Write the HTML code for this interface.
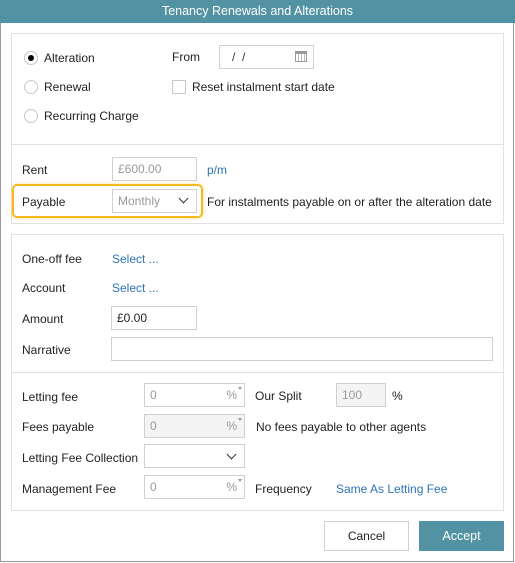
<!DOCTYPE html>
<html><head><style>
*{box-sizing:border-box}
body{margin:0;width:515px;height:563px;background:#fff;font-family:"Liberation Sans",sans-serif;font-size:12px;color:#222;position:relative;overflow:hidden}
.a{position:absolute}
.win{left:0;top:0;width:514px;height:562px;border:1px solid #9a9a9a;border-top:none}
.title{left:0;top:0;width:515px;height:23px;background:#5292a3;color:#fff;text-align:center;line-height:23px;font-size:12.5px}
.panel{border:1px solid #e1e1e1;background:#fff}
.inp{border:1px solid #d0d0d0;background:#fff;height:24px;line-height:22px;padding-left:5px;color:#999}
.dis{background:#f4f4f4}
.lnk{color:#2e74b5}
.rad{width:14px;height:14px;border:1px solid #c8c8c8;border-radius:50%;background:#fff}
.pct{position:absolute;right:7px;top:0;color:#999}
.pct:after{content:"";position:absolute;right:-5px;top:3px;border:2px solid transparent;border-top:3px solid #999}
.chev{position:absolute;right:9px;top:6px;width:7px;height:7px;border-right:1.5px solid #333;border-bottom:1.5px solid #333;transform:rotate(45deg)}
</style></head><body>
<div class="a win"></div>
<div class="a title">Tenancy Renewals and Alterations</div>

<div class="a panel" style="left:11px;top:33px;width:493px;height:191px"></div>
<div class="a" style="left:12px;top:144px;width:491px;height:1px;background:#e1e1e1"></div>

<div class="a rad" style="left:24px;top:51px"><div class="a" style="left:3px;top:3px;width:6px;height:6px;border-radius:50%;background:#000"></div></div>
<div class="a" style="left:44px;top:51px">Alteration</div>
<div class="a rad" style="left:24px;top:80px"></div>
<div class="a" style="left:44px;top:80px">Renewal</div>
<div class="a rad" style="left:24px;top:109px"></div>
<div class="a" style="left:44px;top:109px">Recurring Charge</div>

<div class="a" style="left:172px;top:50px">From</div>
<div class="a inp" style="left:219px;top:45px;width:95px;color:#333;padding-left:12px">/ &nbsp;/</div>
<div class="a" style="left:295px;top:51px;width:12px;height:11px;border:1px solid #999;border-top:3px solid #999;background:repeating-linear-gradient(90deg,#fff 0 2px,#bbb 2px 3px)"></div>
<div class="a" style="left:172px;top:80px;width:14px;height:14px;border:1px solid #c8c8c8"></div>
<div class="a" style="left:192px;top:80px">Reset instalment start date</div>

<div class="a" style="left:22px;top:163px">Rent</div>
<div class="a inp" style="left:112px;top:157px;width:85px">£600.00</div>
<div class="a lnk" style="left:207px;top:163px">p/m</div>
<div class="a" style="left:12px;top:184px;width:191px;height:34px;border:2px solid #f5b91f;border-radius:5px;box-shadow:0 0 4px rgba(245,185,31,.4)"></div>
<div class="a" style="left:22px;top:195px">Payable</div>
<div class="a inp" style="left:112px;top:189px;width:85px">Monthly<span class="chev" style="top:5px"></span></div>
<div class="a" style="left:207px;top:195px">For instalments payable on or after the alteration date</div>

<div class="a panel" style="left:11px;top:234px;width:493px;height:277px"></div>
<div class="a" style="left:12px;top:372px;width:491px;height:1px;background:#e1e1e1"></div>

<div class="a" style="left:22px;top:252px">One-off fee</div>
<div class="a lnk" style="left:112px;top:252px">Select ...</div>
<div class="a" style="left:22px;top:281px">Account</div>
<div class="a lnk" style="left:112px;top:281px">Select ...</div>
<div class="a" style="left:22px;top:312px">Amount</div>
<div class="a inp" style="left:111px;top:306px;width:86px;color:#222">£0.00</div>
<div class="a" style="left:22px;top:343px">Narrative</div>
<div class="a inp" style="left:111px;top:337px;width:382px"></div>

<div class="a" style="left:22px;top:390px">Letting fee</div>
<div class="a inp" style="left:144px;top:383px;width:101px">0<span class="pct">%</span></div>
<div class="a" style="left:255px;top:389px">Our Split</div>
<div class="a inp dis" style="left:336px;top:383px;width:50px">100</div>
<div class="a" style="left:392px;top:389px">%</div>
<div class="a" style="left:22px;top:420px">Fees payable</div>
<div class="a inp dis" style="left:144px;top:414px;width:101px">0<span class="pct">%</span></div>
<div class="a" style="left:256px;top:420px">No fees payable to other agents</div>
<div class="a" style="left:22px;top:451px">Letting Fee Collection</div>
<div class="a inp" style="left:144px;top:444px;width:101px"><span class="chev"></span></div>
<div class="a" style="left:22px;top:482px">Management Fee</div>
<div class="a inp" style="left:144px;top:475px;width:101px">0<span class="pct">%</span></div>
<div class="a" style="left:255px;top:482px">Frequency</div>
<div class="a lnk" style="left:336px;top:482px">Same As Letting Fee</div>

<div class="a" style="left:324px;top:521px;width:85px;height:30px;border:1px solid #d0d0d0;text-align:center;line-height:28px">Cancel</div>
<div class="a" style="left:419px;top:521px;width:85px;height:30px;background:#5292a3;color:#fff;text-align:center;line-height:30px;font-size:12.5px">Accept</div>
</body></html>
